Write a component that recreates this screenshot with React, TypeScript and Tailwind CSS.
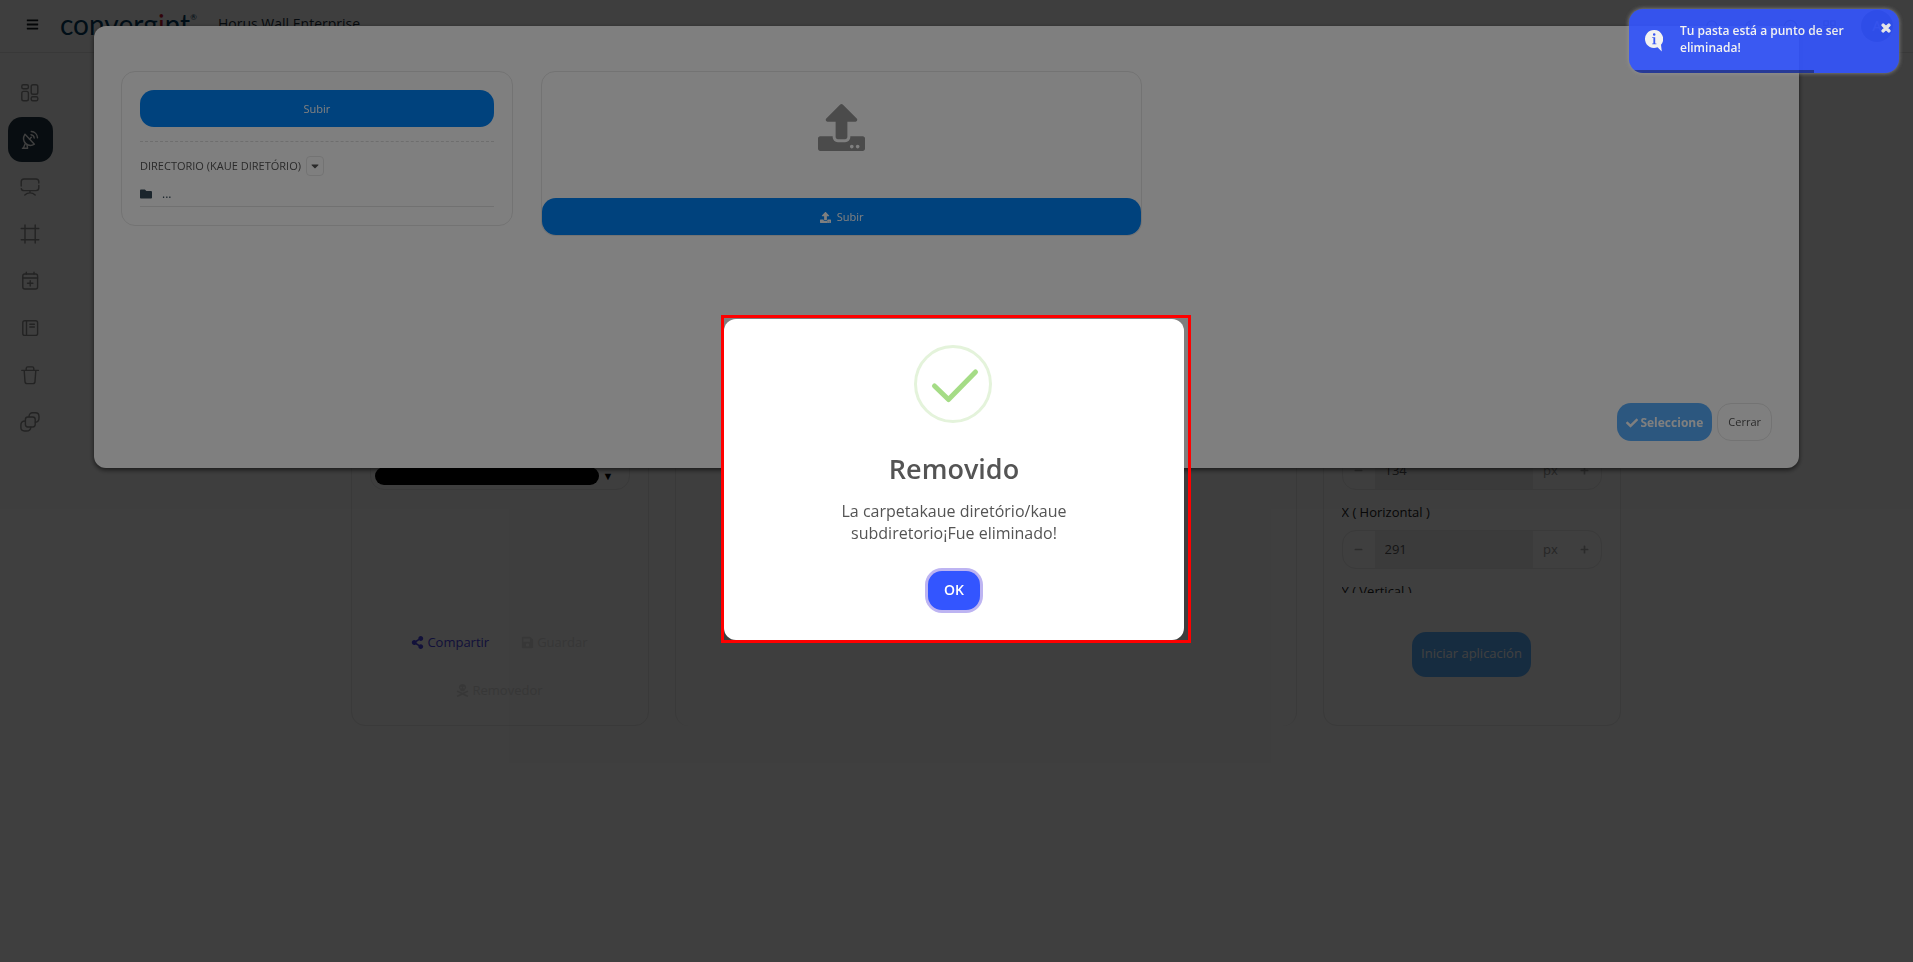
import type { ReactNode } from 'react';
import {
  FaBars,
  FaCaretDown,
  FaCheck,
  FaFolder,
  FaMinus,
  FaPlus,
  FaSave,
  FaShareAlt,
  FaSkullCrossbones,
  FaTimes,
  FaUpload,
} from 'react-icons/fa';
import { FiGrid, FiInfo, FiMoon, FiSearch } from 'react-icons/fi';

function Glyph({ children }: { children: ReactNode }) {
  return (
    <svg
      viewBox="0 0 20 20"
      className="size-5"
      fill="none"
      stroke="currentColor"
      strokeWidth="1.4"
      strokeLinecap="round"
      strokeLinejoin="round"
      aria-hidden="true"
    >
      {children}
    </svg>
  );
}

const navItems = [
  {
    label: 'Panel',
    icon: (
      <Glyph>
        <rect x="1.8" y="1.8" width="6.6" height="4" rx="1.5" />
        <rect x="11.2" y="1.8" width="6.6" height="9.4" rx="1.8" />
        <rect x="1.8" y="8.4" width="6.6" height="9.4" rx="1.8" />
        <rect x="11.2" y="13.8" width="6.6" height="4" rx="1.5" />
      </Glyph>
    ),
  },
  {
    label: 'Fuentes',
    active: true,
    icon: (
      <Glyph>
        <path d="M5 4.200C3 7.600 3.300 11.400 5.800 13.600c2.500 2.200 5.800 2.400 8.600.6z" />
        <path d="M9.500 9.200l1.800-1.900M11 4.700c1.700.2 3 1.500 3.200 3.300M11.300 1.500c3.400.2 6 2.900 6.200 6.300" />
        <path d="M5.200 13.800L3.400 18M2.400 18.200h5.200l-.6-3.200" />
      </Glyph>
    ),
  },
  {
    label: 'Pantallas',
    icon: (
      <Glyph>
        <path d="M1.200 9V4.800C1.200 3 2.200 2 4 2h12c1.800 0 2.800 1 2.800 2.800V6M18.800 8.500v2.300c0 1.800-1 2.800-2.800 2.800H4c-1.500 0-2.500-.7-2.700-2" />
        <path d="M10 13.800v2M4.800 18c1.500-1.400 3.200-2.100 5.200-2.100s3.700.7 5.200 2.100" />
      </Glyph>
    ),
  },
  {
    label: 'Marcos',
    icon: (
      <Glyph>
        <path d="M5 1v18M15.200 1v18M1.200 4.500h17.600M1.200 15.800h17.600" />
      </Glyph>
    ),
  },
  {
    label: 'Agenda',
    icon: (
      <Glyph>
        <rect x="2.800" y="3" width="14.800" height="15" rx="2" />
        <path d="M2.800 7h14.800M6.300 1.200V3M14 1.200V3M10.200 9.600v5.400M7.500 12.300h5.400" />
      </Glyph>
    ),
  },
  {
    label: 'Registros',
    icon: (
      <Glyph>
        <rect x="2.800" y="2.800" width="14.800" height="14.600" rx="2" />
        <path d="M6.500 2.800v14.600M9.800 6.200h4.600M9.800 9h4.600" />
      </Glyph>
    ),
  },
  {
    label: 'Papelera',
    icon: (
      <Glyph>
        <path d="M1.800 5.400h16.600M6.200 5.200V3.400c0-1 .5-1.500 1.500-1.500h4.600c1 0 1.500.5 1.500 1.500v1.800M4.200 5.600l.8 11c.1 1.300.8 2 2.100 2h5.800c1.300 0 2-.7 2.100-2l.8-11" />
      </Glyph>
    ),
  },
  {
    label: 'Capas',
    icon: (
      <Glyph>
        <rect x="5.400" y="5" width="9.800" height="10" rx="2.400" />
        <path d="M9 4.800C9 2.400 10.300.8 12.600.8h2.800c2.200 0 3.600 1.400 3.600 3.600V6c0 2.400-1.300 4-3.600 4.200M5.200 9C2.600 9 .9 10.600.9 13v2.600C.9 17.800 2.200 19 4.400 19H6.500c2.500 0 4.200-1.600 4.300-3.800" />
      </Glyph>
    ),
  },
];

function Header() {
  return (
    <header className="flex h-[53px] items-center border-b border-[#e2e2e2] pr-5 pl-[26px]">
      <button type="button" aria-label="Menú" className="pb-1 text-[13px] text-[#10191f]">
        <FaBars />
      </button>
      <a
        href="#inicio"
        className="ml-[21px] flex w-[158px] items-start pb-1 font-['Lato',sans-serif] text-[28px] leading-[44px] text-[#003a5c]"
      >
        conver<span>g</span>
        <span className="text-[#c8102e]">i</span>nt
        <span className="text-[8px] leading-[30px]">®</span>
      </a>
      <h1 className="flex-1 pb-1 text-sm leading-[22px] font-medium text-[#1b2e3c]">Horus Wall Enterprise</h1>
      <div className="flex items-center gap-6 text-[15px] text-[#333]">
        <FiSearch />
        <FiMoon />
        <FiInfo />
        <FiGrid />
        <span className="flex size-8 items-center justify-center rounded-full bg-[#1f3341] text-sm text-white">A</span>
      </div>
    </header>
  );
}

function Sidebar() {
  return (
    <nav className="flex w-[60px] shrink-0 flex-col items-center gap-0.5 pt-[17px]" aria-label="Principal">
      {navItems.map((item) => (
        <a
          key={item.label}
          href={'#' + item.label.toLowerCase()}
          aria-label={item.label}
          className={
            item.active
              ? 'flex size-[45px] items-center justify-center rounded-[14px] bg-[#223645] text-white'
              : 'flex size-[45px] items-center justify-center text-[#8c8c8c]'
          }
        >
          {item.icon}
        </a>
      ))}
    </nav>
  );
}

function NumberField({ id, label, value }: { id: string; label?: string; value: string }) {
  return (
    <div>
      {label && (
        <label htmlFor={id} className="block pt-[10px] pb-[6px] text-[13px] leading-6 font-medium text-[#222]">
          {label}
        </label>
      )}
      <div className="flex h-[39px] items-stretch overflow-hidden rounded-[14px] border border-[#e6e6e6] text-[13px] text-[#999]">
        <button type="button" aria-label="Reducir" className="flex w-8 items-center justify-center text-[9px] text-[#adadad]">
          <FaMinus />
        </button>
        <input
          id={id}
          aria-label={label ?? 'Altura'}
          defaultValue={value}
          className="min-w-0 flex-1 bg-[#ebebeb] px-[10px] text-[#555]"
        />
        <span className="flex w-9 items-center justify-center">px</span>
        <button type="button" aria-label="Aumentar" className="flex w-8 items-center justify-center text-[9px] text-[#adadad]">
          <FaPlus />
        </button>
      </div>
    </div>
  );
}

function Workspace() {
  return (
    <main className="flex-1 pt-[352px] pr-0.5">
      <div className="mx-auto grid max-w-[1270px] grid-cols-4 gap-[26px]">
        <section className="flex flex-col rounded-[14px] border border-[#e6e6e6] px-[18px] pt-[45px] pb-[11px]">
          <div className="flex h-[39px] items-end rounded-[14px] border border-[#e6e6e6] px-1 pb-1">
            <div className="h-[18px] w-56 rounded-full bg-black" />
            <span className="pl-1 text-[11px] leading-[18px] text-black">▼</span>
          </div>
          <div className="mt-auto flex flex-wrap justify-center gap-x-8 text-[13px] leading-6">
            <a href="#compartir" className="flex h-12 items-center gap-[3px] text-[#4a44e6]">
              <FaShareAlt />
              Compartir
            </a>
            <button type="button" className="flex h-12 items-center gap-[3px] text-[#dcdcdc]">
              <FaSave />
              Guardar
            </button>
            <button type="button" className="flex h-12 items-center gap-[3px] text-[#dcdcdc]">
              <FaSkullCrossbones />
              Removedor
            </button>
          </div>
        </section>
        <section className="col-span-2 rounded-[14px] border-x border-[#e6e6e6]" />
        <section className="flex flex-col items-center rounded-[14px] border border-[#e6e6e6] px-[18px] pt-[45px] pb-12">
          <div className="h-[142px] w-full overflow-hidden">
            <NumberField id="altura" value="134" />
            <NumberField id="x" label="X ( Horizontal )" value="291" />
            <NumberField id="y" label="Y ( Vertical )" value="0" />
          </div>
          <button
            type="button"
            className="mt-[39px] h-[45px] rounded-[14px] bg-[#58aeff] px-[9px] pb-0.5 text-[13px] text-white"
          >
            Iniciar aplicación
          </button>
        </section>
      </div>
    </main>
  );
}

function FileManager() {
  return (
    <div className="fixed inset-0 z-20 bg-black/50 pt-[26px] pr-[114px] pl-[94px]">
      <div
        role="dialog"
        aria-label="Archivos"
        className="rounded-xl bg-white px-[27px] pt-[45px] pb-[27px] shadow-[0_2px_5px_rgba(0,0,0,0.6)]"
      >
        <div className="grid min-h-[332px] grid-cols-8 items-start gap-7">
          <section className="col-span-2 rounded-[14px] border border-[#e6e6e6] px-[18px] py-[18px]">
            <button type="button" className="h-[37px] w-full rounded-[14px] bg-[#0084fa] pt-0.5 text-[11px] text-white">
              Subir
            </button>
            <div className="mt-[14px] border-t border-dashed border-[#dcdcdc]" />
            <div className="mt-[14px] flex items-center gap-[5px] text-[11px] leading-5 font-medium text-[#555]">
              DIRECTORIO (KAUE DIRETÓRIO)
              <button
                type="button"
                aria-label="Opciones"
                className="flex h-5 w-[18px] items-center justify-center rounded border border-[#e6e6e6] text-xs"
              >
                <FaCaretDown />
              </button>
            </div>
            <a
              href="#carpeta"
              className="mt-2 flex items-center gap-[10px] border-b border-[#e2e2e2] pb-[3px] text-xs leading-[19px] text-[#364a59]"
            >
              <FaFolder />
              ...
            </a>
          </section>
          <section className="col-span-3 rounded-[14px] border border-[#e6e6e6]">
            <div className="flex h-[126px] items-start justify-center pt-8 text-[47px] text-[#969696]">
              <FaUpload />
            </div>
            <button
              type="button"
              className="flex h-[37px] w-full items-center justify-center gap-1.5 rounded-[14px] bg-[#0084fa] pt-0.5 text-[11px] text-white"
            >
              <FaUpload />
              Subir
            </button>
          </section>
        </div>
        <div className="flex justify-end gap-[5px]">
          <button
            type="button"
            className="flex h-[38px] items-center gap-0.5 rounded-[14px] bg-[#58aeff] px-[9px] pt-0.5 text-xs font-bold text-white"
          >
            <FaCheck />
            Seleccione
          </button>
          <button
            type="button"
            className="h-[38px] rounded-[14px] border border-[#e6e6e6] px-[10px] text-[11px] text-[#555]"
          >
            Cerrar
          </button>
        </div>
      </div>
    </div>
  );
}

function Confirmation() {
  return (
    <div className="fixed inset-0 z-30 flex items-center justify-center bg-black/50 pr-[5px] pb-[3px]">
      <div
        role="alertdialog"
        aria-labelledby="alert-title"
        className="relative flex w-[460px] flex-col items-center rounded-xl bg-white pt-[26px] pb-[30px] text-center text-[#545454]"
      >
        <div className="pointer-events-none absolute -top-1 -right-[7px] -bottom-[3px] -left-[3px] border-[3px] border-[#ff0000]" />
        <svg viewBox="0 0 78 78" className="mr-0.5 size-[78px]" fill="none" aria-hidden="true">
          <circle cx="39" cy="39" r="37.500" stroke="#e4f3db" strokeWidth="3" />
          <path d="M20.500 41L34.500 54.500L61.500 27" stroke="#a5dc86" strokeWidth="5" strokeLinecap="round" strokeLinejoin="round" />
        </svg>
        <h2 id="alert-title" className="mt-7 text-[27px] leading-9 font-semibold">
          Removido
        </h2>
        <p className="mt-[13px] max-w-[260px] text-base leading-[22px]">
          La carpetakaue diretório/kaue subdiretorio¡Fue eliminado!
        </p>
        <button
          type="button"
          className="mt-[27px] h-[39px] w-[52px] rounded-[14px] bg-[#3355ff] pb-0.5 text-sm font-semibold text-white ring-3 ring-[#bdb4f2]"
        >
          OK
        </button>
      </div>
    </div>
  );
}

function Toast() {
  return (
    <div
      role="status"
      className="fixed top-[9px] right-[14px] z-40 flex h-16 w-[270px] items-start overflow-hidden rounded-[14px] bg-[#3355ff] pt-[13px] pl-4 opacity-90 shadow-[0_0_4px_#999]"
    >
      <svg viewBox="0 0 18 22" className="mt-2 h-[22px] w-[18px]" aria-hidden="true">
        <path d="M9 0a9 9 0 1 0 3.500 17.300L16.800 21.500 16 14.800A9 9 0 0 0 9 0z" fill="#fff" />
        <path d="M9.200 3.200a1.300 1.300 0 1 1 0 2.600 1.300 1.300 0 0 1 0-2.600zM7.200 7.200h3v6.200h1.200v.9H7.200v-.9h1.200V8.100H7.200z" fill="#3355ff" />
      </svg>
      <p className="ml-[17px] w-[180px] text-xs leading-[17px] font-semibold text-white">
        Tu pasta está a punto de ser eliminada!
      </p>
      <button type="button" aria-label="Cerrar aviso" className="ml-5 text-xs text-white">
        <FaTimes className="stroke-current stroke-[50]" />
      </button>
      <div className="absolute bottom-0 left-0 h-[3px] w-[185px] bg-black/40" />
    </div>
  );
}

export default function App() {
  return (
    <div className="min-h-screen bg-[#f9f9f9] font-['Open_Sans','Noto_Sans',sans-serif]">
      <Header />
      <div className="flex">
        <Sidebar />
        <Workspace />
      </div>
      <FileManager />
      <Confirmation />
      <Toast />
    </div>
  );
}
